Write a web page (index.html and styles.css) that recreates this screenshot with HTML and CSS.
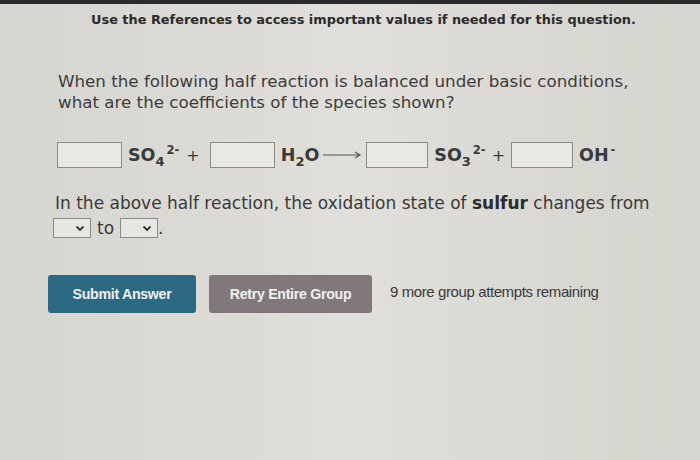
FILE: index.html
```html
<!DOCTYPE html>
<html>
<head>
<meta charset="utf-8">
<link rel="stylesheet" href="styles.css">
</head>
<body>
<div class="bezel"></div>
<div class="page">
  <div class="refs">Use the References to access important values if needed for this question.</div>
  <div class="question">
    <p class="prompt">When the following half reaction is balanced under basic conditions, what are the coefficients of the species shown?</p>
    <div class="equation">
      <span class="box b1"></span>
      <span class="species">SO<sub>4</sub><sup>2-</sup></span>
      <span class="plus">+</span>
      <span class="box b2"></span>
      <span class="species">H<sub>2</sub>O</span>
      <svg class="arrow" width="40" height="10" viewBox="0 0 40 10"><path d="M1 5H38M33 2L38 5L33 8" fill="none" stroke="#555" stroke-width="1.2"/></svg>
      <span class="box b3"></span>
      <span class="species">SO<sub>3</sub><sup>2-</sup></span>
      <span class="plus p2">+</span>
      <span class="box b4"></span>
      <span class="species">OH<sup>-</sup></span>
    </div>
    <p class="ox">In the above half reaction, the oxidation state of <b>sulfur</b> changes from
      <span class="line2"><span class="sel"><svg width="10" height="7" viewBox="0 0 10 7"><path d="M1.5 1.5L5 5L8.5 1.5" fill="none" stroke="#333" stroke-width="1.8"/></svg></span><span class="to">to</span><span class="sel"><svg width="10" height="7" viewBox="0 0 10 7"><path d="M1.5 1.5L5 5L8.5 1.5" fill="none" stroke="#333" stroke-width="1.8"/></svg></span><span class="dot">.</span></span>
    </p>
    <div class="actions">
      <button class="btn submit">Submit Answer</button>
      <button class="btn retry">Retry Entire Group</button>
      <span class="remain">9 more group attempts remaining</span>
    </div>
  </div>
</div>
</body>
</html>
```

FILE: styles.css
```css
html, body {
  margin: 0;
  padding: 0;
}
body {
  width: 700px;
  height: 460px;
  overflow: hidden;
  background: linear-gradient(90deg, #d6d6d0 0%, #dcdbd6 35%, #e0dfdb 50%, #dad9d3 75%, #d5d6cf 100%);
  font-family: "DejaVu Sans", Verdana, sans-serif;
  color: #3a3a3a;
}
.bezel {
  height: 4px;
  background: #2a2a2c;
}
.page {
  padding: 7px 0 0 0;
}
.refs {
  font-weight: bold;
  font-size: 12.9px;
  color: #2b2b2b;
  padding-left: 91px;
  line-height: 18px;
}
.question {
  padding-left: 58px;
  padding-top: 42px;
}
.prompt {
  margin: 0;
  font-size: 16.7px;
  line-height: 21px;
  width: 600px;
  color: #3c3c3c;
}
.equation {
  display: flex;
  align-items: center;
  margin-top: 28px;
  margin-left: -1px;
  height: 28px;
}
.box {
  height: 26px;
  border: 1px solid #8a8a8a;
  background: #e8e8e4;
  box-sizing: border-box;
  flex: none;
}
.b1 { width: 65px; }
.b2 { width: 65px; }
.b3 { width: 62px; }
.b4 { width: 62px; }
.species {
  font-weight: bold;
  font-size: 17.5px;
  margin-left: 6px;
  color: #3a3a3a;
  white-space: nowrap;
}
.species sub {
  font-size: 13px;
  vertical-align: -5px;
  line-height: 0;
}
.species sup {
  font-size: 11.5px;
  vertical-align: 7px;
  line-height: 0;
  font-weight: bold;
  margin-left: 2px;
}
.plus {
  font-size: 16px;
  margin: 0 10px 0 7px;
}
.plus.p2 {
  margin: 0 6px 0 6px;
}
.arrow {
  margin: 0 4px 0 3px;
}
.ox {
  margin: 0;
  margin-top: 22px;
  margin-left: -3px;
  font-size: 17px;
  line-height: 24px;
  width: 620px;
  color: #3a3a3a;
}
.ox b { color: #2c2c2c; }
.line2 {
  display: flex;
  align-items: center;
  margin-top: 1px;
  margin-left: -2px;
}
.sel {
  display: inline-flex;
  align-items: center;
  justify-content: flex-end;
  width: 38px;
  height: 20px;
  border: 1px solid #8a8a8a;
  background: #e6e6e2;
  box-sizing: border-box;
  padding-right: 5px;
}
.to {
  margin: 0 6px 0 6px;
}
.actions {
  display: flex;
  align-items: center;
  margin-top: 35px;
  margin-left: -10px;
}
.btn {
  border: none;
  border-radius: 3px;
  font-family: "Liberation Sans", Arial, sans-serif;
  font-weight: bold;
  font-size: 14.2px;
  color: #f0f0f0;
  height: 38px;
  letter-spacing: -0.3px;
}
.submit {
  width: 148px;
  background: #2c6a84;
}
.retry {
  width: 163px;
  margin-left: 13px;
  background: #80787a;
}
.remain {
  font-family: "Liberation Sans", Arial, sans-serif;
  font-size: 15px;
  margin-left: 18px;
  margin-top: -6px;
  color: #3a3a3a;
  letter-spacing: -0.4px;
}
```
